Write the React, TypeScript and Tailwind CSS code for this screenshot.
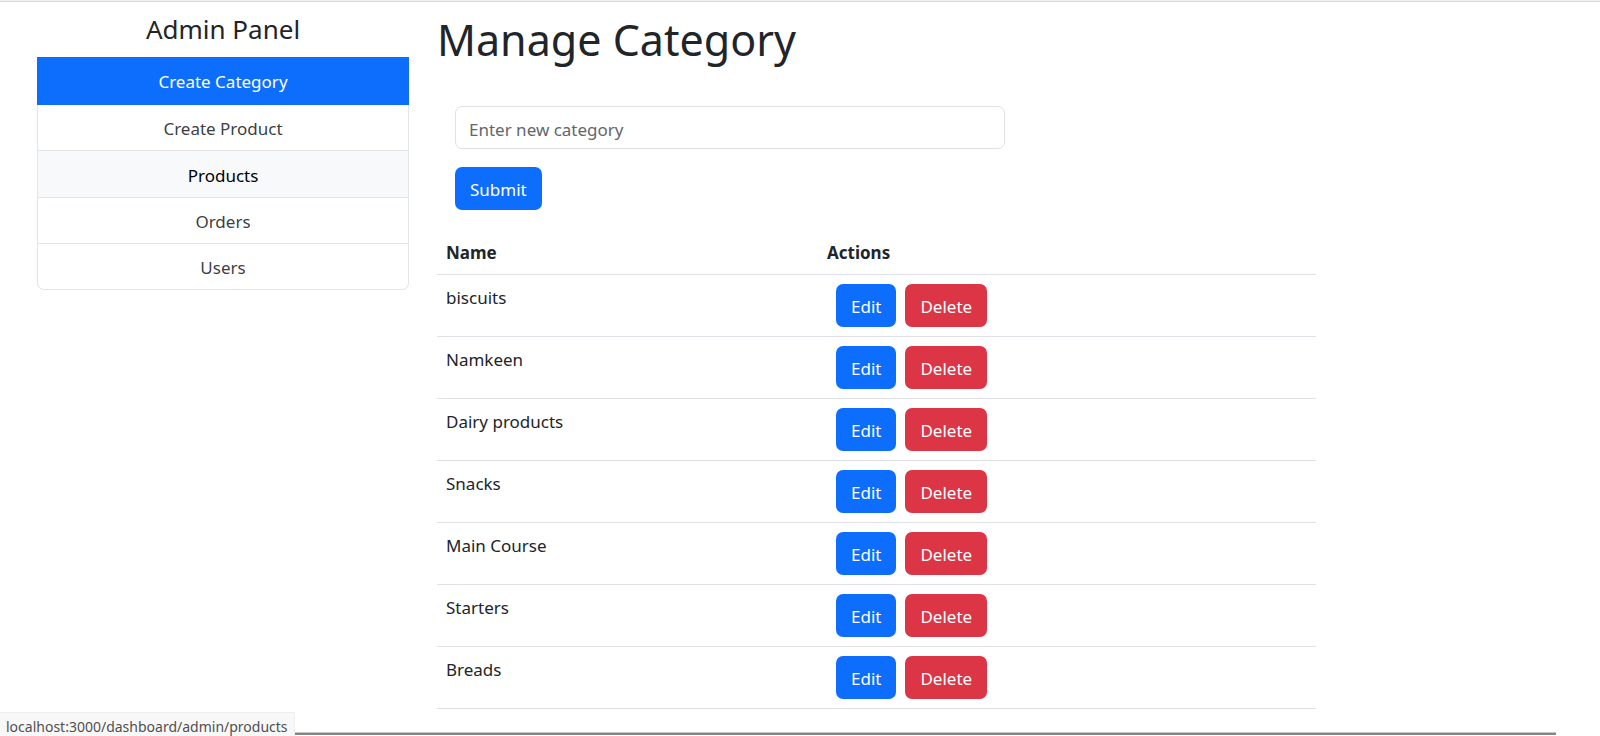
import React from "react";

type MenuItem = { label: string; href: string; state?: "active" | "hover" };

const menu: MenuItem[] = [
  { label: "Create Category", href: "#create-category", state: "active" },
  { label: "Create Product", href: "#create-product" },
  { label: "Products", href: "#products", state: "hover" },
  { label: "Orders", href: "#orders" },
  { label: "Users", href: "#users" },
];

const categories = [
  "biscuits",
  "Namkeen",
  "Dairy products",
  "Snacks",
  "Main Course",
  "Starters",
  "Breads",
];

function itemClass(item: MenuItem) {
  if (item.state === "active") return "h-12 border-[#0d6efd] bg-[#0d6efd] text-white";
  if (item.state === "hover") return "h-[47px] border-[#e2e5e8] bg-[#f8f9fa] text-black";
  return "h-[46px] border-[#e2e5e8] text-[#212529]/90";
}

function AdminMenu() {
  return (
    <nav className="text-center">
      <h4 className="mt-[7px] mb-3 text-[26px] leading-8">Admin Panel</h4>
      <div>
        {menu.map((item) => (
          <a
            key={item.label}
            href={item.href}
            className={`flex items-center justify-center border-x border-b pt-[3px] last:rounded-b-[7px] ${itemClass(item)}`}
          >
            {item.label}
          </a>
        ))}
      </div>
    </nav>
  );
}

function Button({ tone, children, type = "button" }: {
  tone: "primary" | "danger";
  children: React.ReactNode;
  type?: "button" | "submit";
}) {
  const color = tone === "primary" ? "bg-[#0d6efd]" : "bg-[#dc3545]";
  return (
    <button type={type} className={`h-[43px] rounded-[7px] px-[15px] pt-[3px] text-white ${color}`}>
      {children}
    </button>
  );
}

function CategoryForm() {
  return (
    <form className="w-1/2 p-[18px]" onSubmit={(e) => e.preventDefault()}>
      <input
        type="text"
        aria-label="Category name"
        placeholder="Enter new category"
        className="mb-[18px] block h-[43px] w-full rounded-[7px] border border-[#dee2e6] bg-white px-[13px] pt-[3px] placeholder:text-[#62676c]"
      />
      <Button tone="primary" type="submit">Submit</Button>
    </form>
  );
}

function CategoryTable() {
  return (
    <table className="w-3/4 border-collapse text-left">
      <thead>
        <tr className="h-[46px] border-b border-[#dee2e6]">
          <th scope="col" className="w-[381px] px-[9px] pt-[5px] font-bold">Name</th>
          <th scope="col" className="px-[9px] pt-[5px] font-bold">Actions</th>
        </tr>
      </thead>
      <tbody>
        {categories.map((name) => (
          <tr key={name} className="h-[62px] border-b border-[#dee2e6] align-top">
            <td className="px-[9px] pt-[9px]">{name}</td>
            <td className="px-[18px] py-[9px]">
              <div className="flex gap-[9px]">
                <Button tone="primary">Edit</Button>
                <Button tone="danger">Delete</Button>
              </div>
            </td>
          </tr>
        ))}
      </tbody>
    </table>
  );
}

export default function App() {
  return (
    <div className="relative h-screen overflow-hidden border-t border-[#f1f1f1] bg-white font-['Noto_Sans','Liberation_Sans',sans-serif] text-[17px] leading-7 text-[#212529]">
      <div className="border-t border-[#d9d9d9]">
        <div className="-mr-[23px] ml-[23px] grid grid-cols-4 pt-1">
          <div className="px-[14px]">
            <AdminMenu />
          </div>
          <main className="col-span-3 px-[14px]">
            <h1 className="mt-[6px] mb-5 text-[43px] leading-14">Manage Category</h1>
            <CategoryForm />
            <CategoryTable />
          </main>
        </div>
      </div>
      <div className="absolute inset-x-0 bottom-0 flex items-end">
        <div className="h-6 rounded-tr-xs border-t border-r border-[#eeeeee] bg-[#f8f8f8] px-[6px] text-[14px] leading-7 text-[#505050]">
          localhost:3000/dashboard/admin/products
        </div>
        <div className="mr-11 mb-px h-[3px] flex-1 border-t border-[#c4c4c4] bg-[#858585]" />
      </div>
    </div>
  );
}
